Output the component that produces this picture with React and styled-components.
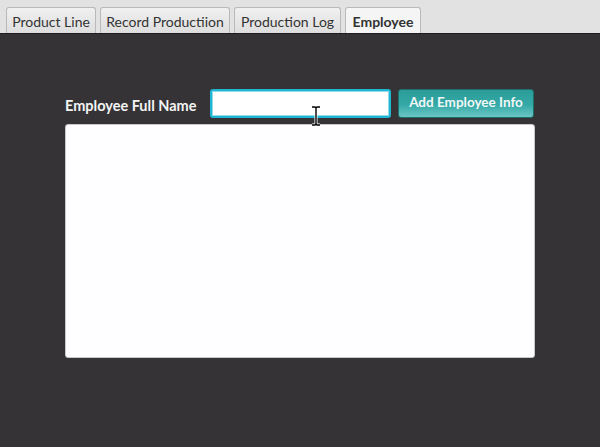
import styled, { createGlobalStyle } from "styled-components";

const GlobalStyle = createGlobalStyle`
    html, body {
        margin: 0;
        padding: 0;
        width: 600px;
        height: 447px;
        overflow: hidden;
        background: #353336;
        font-family: Lato, "Open Sans", sans-serif;
    }
`;

const Window = styled.div`
    width: 600px;
    height: 447px;
    display: flex;
    flex-direction: column;
    background: #353336;
`;

const TabHeader = styled.div`
    height: 33px;
    display: flex;
    align-items: flex-end;
    gap: 4px;
    padding: 0 6px;
    background: #e2e2e2;
    border-bottom: 1px solid #1e1d1f;
`;

const Tab = styled.div`
    width: ${(p) => p.$w}px;
    height: 26px;
    box-sizing: border-box;
    display: flex;
    align-items: center;
    justify-content: center;
    padding-top: 1px;
    border: 1px solid #b9b9b9;
    border-bottom: none;
    border-radius: 3px 3px 0 0;
    background: ${(p) => (p.$active ? "#f5f5f5" : "linear-gradient(#f0f0f0, #dedede)")};
    color: #333;
    font-size: 14px;
    font-weight: ${(p) => (p.$active ? 700 : 400)};
    white-space: nowrap;
`;

const Content = styled.div`
    flex: 1;
    padding: 55px 65px 0 65px;
    display: flex;
    flex-direction: column;
    gap: 7px;
    position: relative;
`;

const FormRow = styled.div`
    display: flex;
    align-items: center;
    height: 28px;
`;

const Label = styled.span`
    color: #f4f4f4;
    font-size: 14.5px;
    font-weight: 700;
    width: 145px;
    padding-top: 4px;
`;

const NameInput = styled.input`
    width: 181px;
    height: 29px;
    box-sizing: border-box;
    border: 2px solid #21b5d4;
    border-radius: 3px;
    background: #ffffff;
    outline: none;
    box-shadow: 0 0 0 1px #8fdcea inset;
`;

const AddButton = styled.button`
    margin-left: 7px;
    width: 136px;
    height: 29px;
    border: 1px solid #1c6f6c;
    border-radius: 3px;
    background: linear-gradient(#2b9c98, #34a9a6 55%, #6cc6c4);
    color: #f2f7f7;
    font-family: Lato, "Open Sans", sans-serif;
    font-size: 13.5px;
    font-weight: 700;
    padding: 0 0 2px 0;
`;

const ListArea = styled.div`
    width: 470px;
    height: 234px;
    box-sizing: border-box;
    background: #fefdff;
    border: 1px solid #c8c8c8;
    border-radius: 3px;
`;

const Cursor = styled.svg`
    position: absolute;
    left: 310px;
    top: 72px;
`;

export default function App() {
    return (
        <>
            <GlobalStyle />
            <Window>
                <TabHeader>
                    <Tab $w={90}>Product Line</Tab>
                    <Tab $w={130}>Record Productiion</Tab>
                    <Tab $w={107}>Production Log</Tab>
                    <Tab $w={76} $active>Employee</Tab>
                </TabHeader>
                <Content>
                    <FormRow>
                        <Label>Employee Full Name</Label>
                        <NameInput />
                        <AddButton>Add Employee Info</AddButton>
                    </FormRow>
                    <ListArea />
                    <Cursor width="12" height="20" viewBox="0 0 12 20">
                        <path d="M2 1h3l1 1 1-1h3M6 2v16M2 19h3l1-1 1 1h3" stroke="#fff" strokeWidth="3" fill="none" />
                        <path d="M2 1h3l1 1 1-1h3M6 2v16M2 19h3l1-1 1 1h3" stroke="#000" strokeWidth="1.4" fill="none" />
                    </Cursor>
                </Content>
            </Window>
        </>
    );
}
